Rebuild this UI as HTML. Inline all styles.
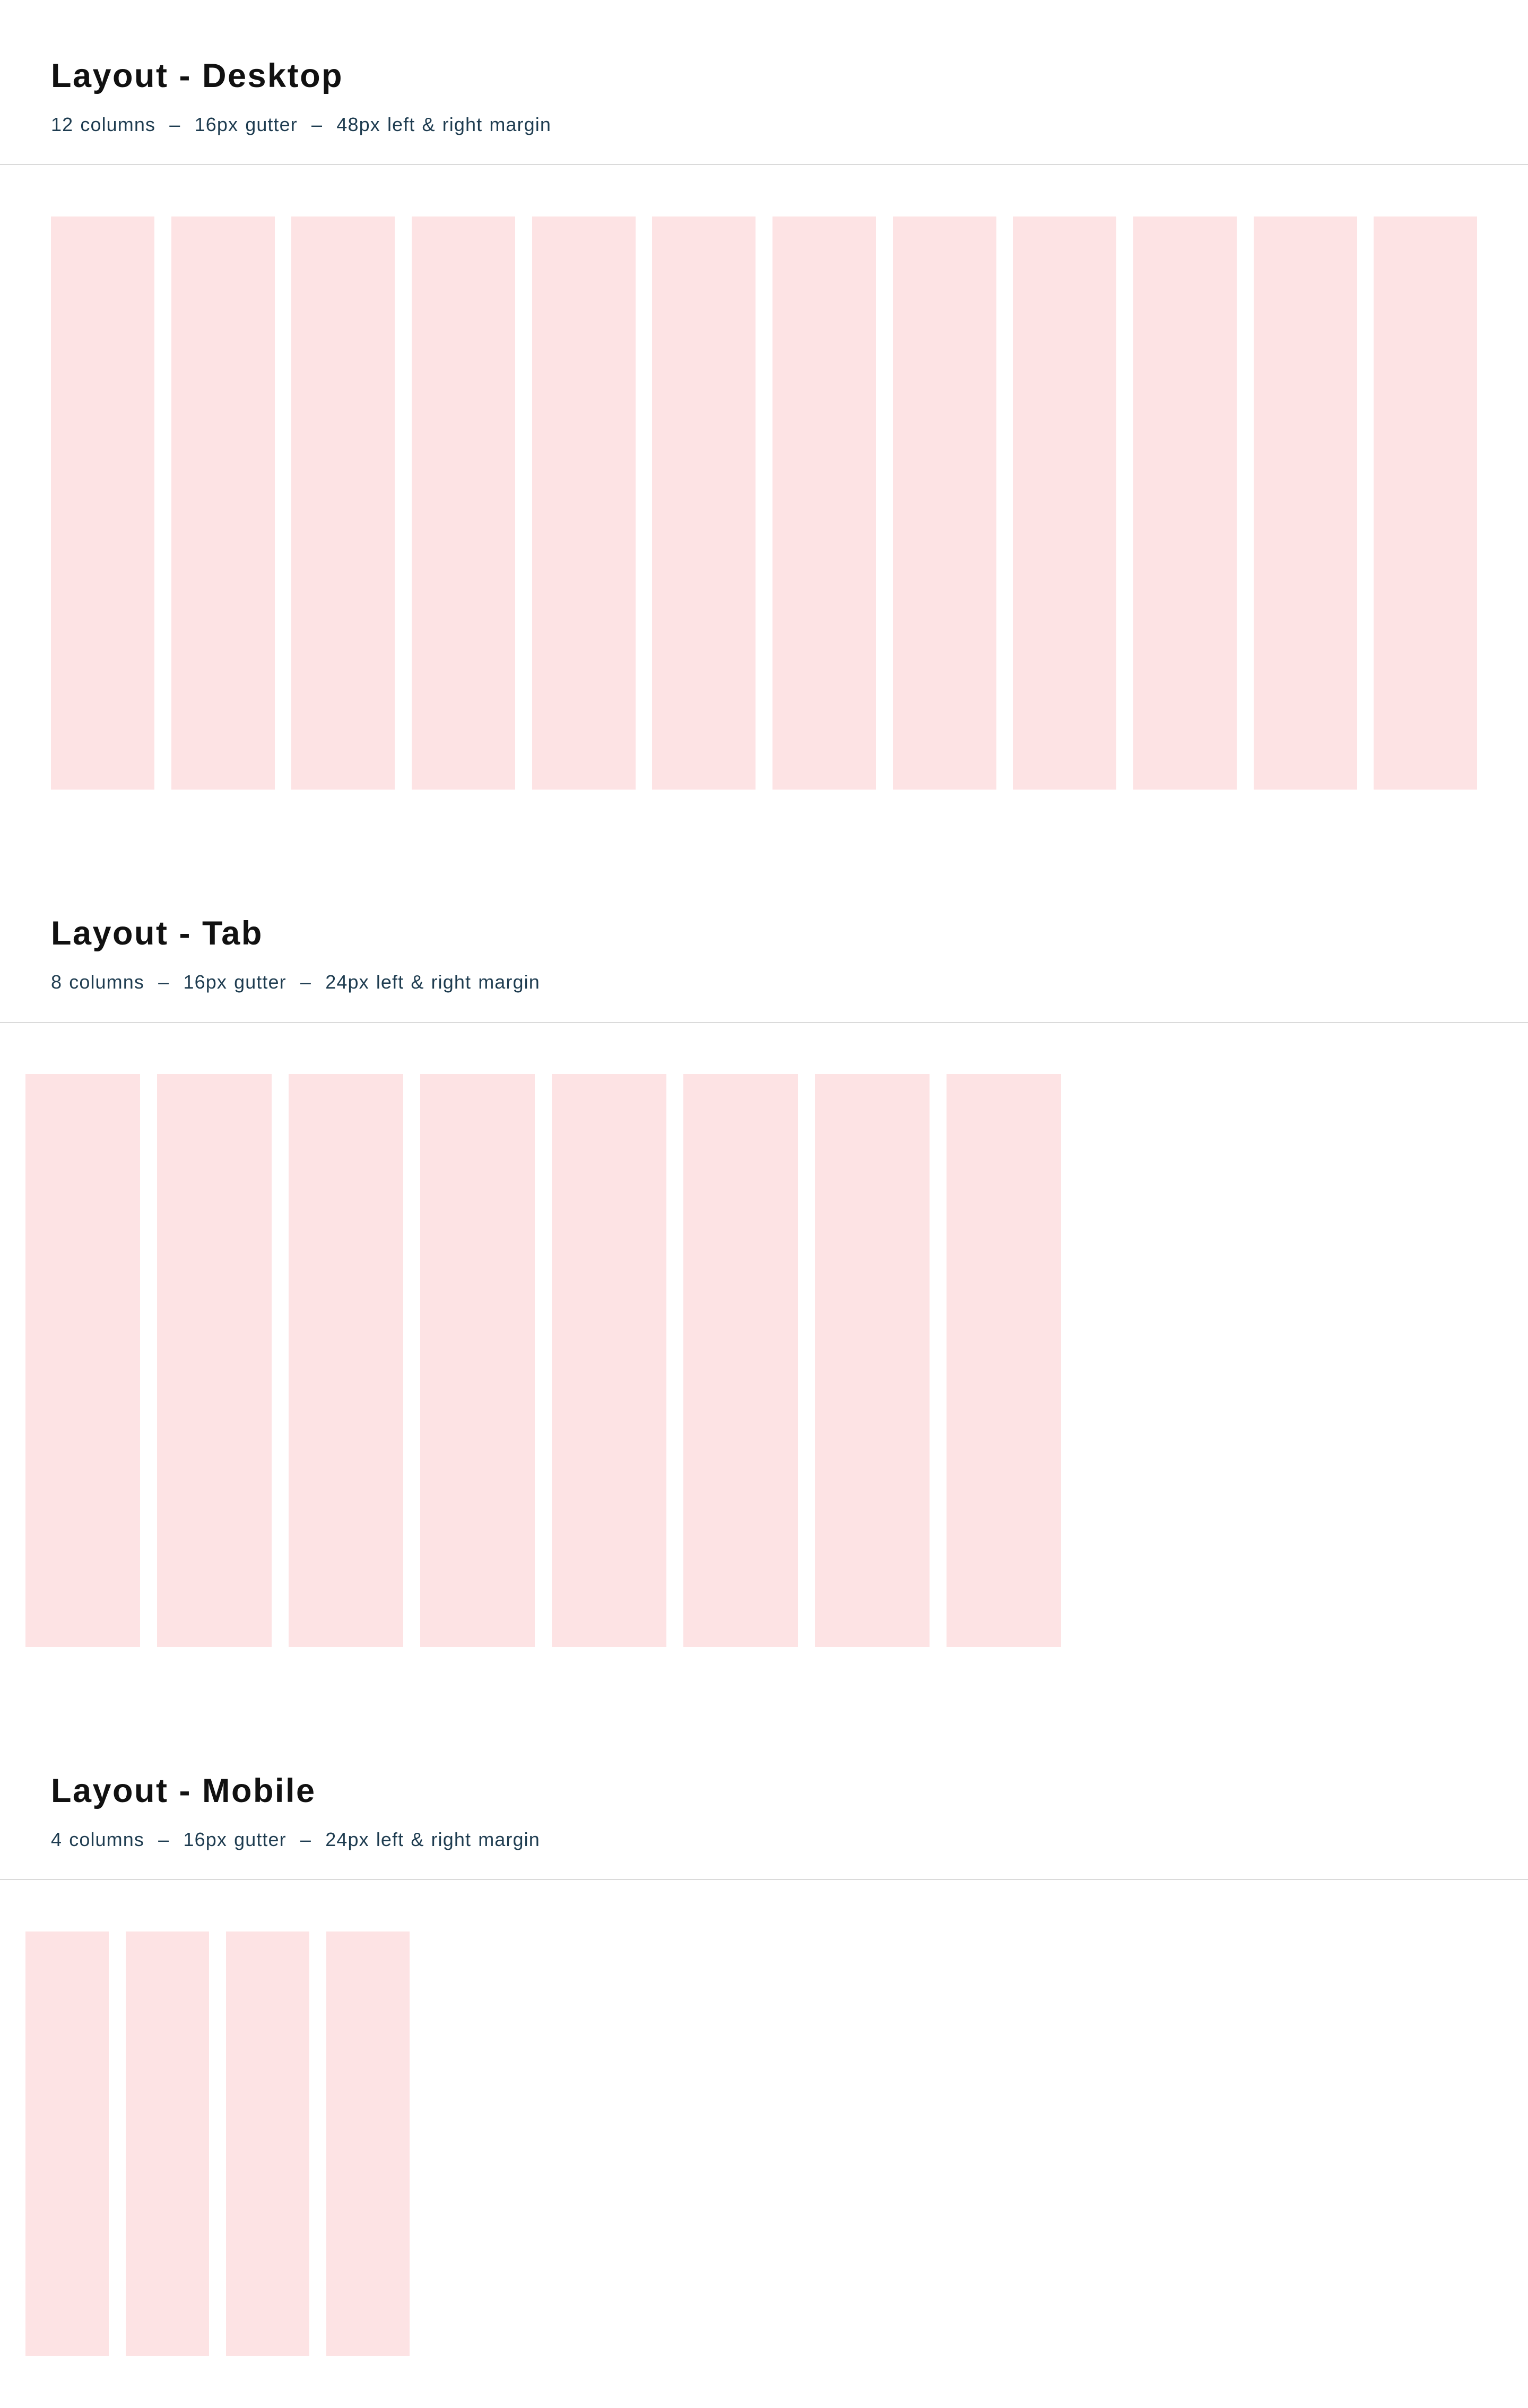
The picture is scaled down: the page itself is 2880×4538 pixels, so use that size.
<!DOCTYPE html>
<html><head><meta charset="utf-8"><style>
html,body{margin:0;padding:0;background:#fff;}
body{width:2880px;height:4538px;position:relative;overflow:hidden;font-family:"Liberation Sans",sans-serif;}
.t{position:absolute;left:96px;font-size:63px;line-height:63px;font-weight:bold;color:#111;white-space:nowrap;letter-spacing:2.5px;}
.s{position:absolute;left:96px;font-size:36px;line-height:36px;color:#1e3c50;white-space:nowrap;letter-spacing:1.1px;word-spacing:2px;}
.l{position:absolute;left:0;width:2880px;height:2px;background:#dadada;}
.c{position:absolute;background:#fde3e4;}
</style></head><body>
<div class="t" style="top:112px">Layout - Desktop</div>
<div class="s" style="top:217px">12 columns &nbsp;–&nbsp; 16px gutter &nbsp;–&nbsp; 48px left &amp; right margin</div>
<div class="l" style="top:309px"></div>

<div class="t" style="top:1728px">Layout - Tab</div>
<div class="s" style="top:1833px">8 columns &nbsp;–&nbsp; 16px gutter &nbsp;–&nbsp; 24px left &amp; right margin</div>
<div class="l" style="top:1926px"></div>

<div class="t" style="top:3344px">Layout - Mobile</div>
<div class="s" style="top:3449px">4 columns &nbsp;–&nbsp; 16px gutter &nbsp;–&nbsp; 24px left &amp; right margin</div>
<div class="l" style="top:3541px"></div>

<div class="c" style="left:96px;top:408px;width:195px;height:1080px"></div>
<div class="c" style="left:323px;top:408px;width:195px;height:1080px"></div>
<div class="c" style="left:549px;top:408px;width:195px;height:1080px"></div>
<div class="c" style="left:776px;top:408px;width:195px;height:1080px"></div>
<div class="c" style="left:1003px;top:408px;width:195px;height:1080px"></div>
<div class="c" style="left:1229px;top:408px;width:195px;height:1080px"></div>
<div class="c" style="left:1456px;top:408px;width:195px;height:1080px"></div>
<div class="c" style="left:1683px;top:408px;width:195px;height:1080px"></div>
<div class="c" style="left:1909px;top:408px;width:195px;height:1080px"></div>
<div class="c" style="left:2136px;top:408px;width:195px;height:1080px"></div>
<div class="c" style="left:2363px;top:408px;width:195px;height:1080px"></div>
<div class="c" style="left:2589px;top:408px;width:195px;height:1080px"></div>

<div class="c" style="left:48px;top:2024px;width:216px;height:1080px"></div>
<div class="c" style="left:296px;top:2024px;width:216px;height:1080px"></div>
<div class="c" style="left:544px;top:2024px;width:216px;height:1080px"></div>
<div class="c" style="left:792px;top:2024px;width:216px;height:1080px"></div>
<div class="c" style="left:1040px;top:2024px;width:216px;height:1080px"></div>
<div class="c" style="left:1288px;top:2024px;width:216px;height:1080px"></div>
<div class="c" style="left:1536px;top:2024px;width:216px;height:1080px"></div>
<div class="c" style="left:1784px;top:2024px;width:216px;height:1080px"></div>

<div class="c" style="left:48px;top:3640px;width:157px;height:800px"></div>
<div class="c" style="left:237px;top:3640px;width:157px;height:800px"></div>
<div class="c" style="left:426px;top:3640px;width:157px;height:800px"></div>
<div class="c" style="left:615px;top:3640px;width:157px;height:800px"></div>
</body></html>
